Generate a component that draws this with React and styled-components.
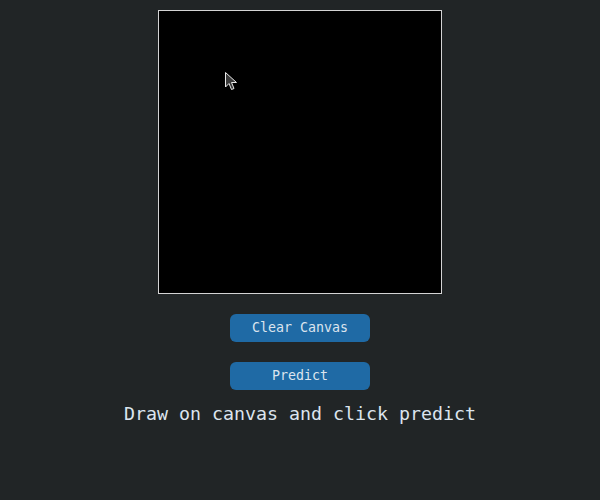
import React from "react";
import styled, { createGlobalStyle } from "styled-components";

const GlobalStyle = createGlobalStyle`
  html, body {
    margin: 0;
    padding: 0;
    background: #212526;
  }
  body {
    font-family: "DejaVu Sans Mono", "Liberation Mono", monospace;
  }
`;

const Page = styled.main`
  width: 600px;
  height: 500px;
  display: flex;
  flex-direction: column;
  align-items: center;
  padding-top: 10px;
  box-sizing: border-box;
`;

const Board = styled.div`
  position: relative;
  width: 282px;
  height: 282px;
  background: #000;
  border: 1px solid #d4d4d4;
`;

const Pointer = styled.svg`
  position: absolute;
  left: 66px;
  top: 61px;
`;

const Actions = styled.div`
  display: flex;
  flex-direction: column;
  gap: 20px;
  margin-top: 20px;
`;

const Button = styled.button`
  width: 140px;
  height: 28px;
  padding: 0 0 2px;
  border: none;
  border-radius: 6px;
  background: #1f6aa5;
  color: #dce4ee;
  font-family: "DejaVu Sans Mono", monospace;
  font-size: 13.3px;
  cursor: pointer;
  &:hover {
    background: #144870;
  }
`;

const Status = styled.p`
  margin: 13px 0 0;
  color: #dce4ee;
  font-size: 18.3px;
  line-height: 22px;
`;

const App = () => {
  return (
    <>
      <GlobalStyle />
      <Page>
        <Board>
          <Pointer width="13" height="20" viewBox="0 0 13 20">
            <path
              d="M0.5 0.5 L0.5 15 L4 11.5 L6.5 17.5 L9 16.5 L6.5 10.5 L11.5 10.5 Z"
              fill="#3a3a3a"
              stroke="#e8e8e8"
              strokeWidth="1"
            />
          </Pointer>
        </Board>
        <Actions>
          <Button>Clear Canvas</Button>
          <Button>Predict</Button>
        </Actions>
        <Status>Draw on canvas and click predict</Status>
      </Page>
    </>
  );
};

export default App;
